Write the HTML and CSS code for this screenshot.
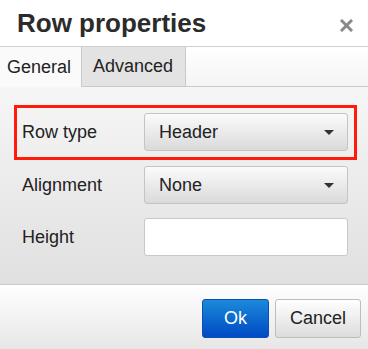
FILE: index.html
```html
<!DOCTYPE html>
<html>
<head>
<meta charset="utf-8">
<link rel="stylesheet" href="styles.css">
</head>
<body>
<div class="dialog">
  <div class="head">
    <h1 class="title">Row properties</h1>
    <span class="close"><svg width="13" height="13" viewBox="0 0 13 13"><path d="M2 2L11 11M11 2L2 11" stroke="#8a8a8a" stroke-width="3" stroke-linecap="square"/></svg></span>
  </div>
  <div class="tabs">
    <div class="tab active">General</div>
    <div class="tab">Advanced</div>
  </div>
  <div class="form">
    <div class="row hl">
      <label class="lbl">Row type</label>
      <div class="select"><span>Header</span><i class="caret"></i></div>
    </div>
    <div class="row">
      <label class="lbl">Alignment</label>
      <div class="select"><span>None</span><i class="caret"></i></div>
    </div>
    <div class="row">
      <label class="lbl">Height</label>
      <div class="input"></div>
    </div>
  </div>
  <div class="foot">
    <button class="btn primary">Ok</button>
    <button class="btn">Cancel</button>
  </div>
</div>
</body>
</html>
```
FILE: styles.css
```css
html, body { margin: 0; padding: 0; }
body { font-family: "Liberation Sans", Arial, sans-serif; color: #222; background: #fff; }
.dialog { width: 368px; height: 349px; display: flex; flex-direction: column; overflow: hidden; }
.head { height: 46px; display: flex; align-items: center; justify-content: space-between; padding: 0 15px 0 17px; border-bottom: 1px solid #d0d0d0; background: #fff; box-sizing: content-box; }
.title { margin: 0; font-size: 26px; font-weight: bold; color: #2b2b2b; }
.close { display: flex; margin-top: 4px; }
.tabs { height: 39px; display: flex; border-bottom: 1px solid #c9c9c9; background: linear-gradient(#ffffff, #f4f4f4); }
.tab { font-size: 18px; color: #222; padding: 0 12px 0 11px; display: flex; align-items: center; border-right: 1px solid #c9c9c9; background: #e3e3e3; }
.tab.active { background: #fafafa; padding: 0 10px 0 7px; margin-bottom: -1px; }
.form { flex: 1; padding: 18px 20px 0 22px; background: linear-gradient(#f6f6f6, #e0e0e0); }
.row { display: flex; align-items: center; height: 38px; margin-bottom: 14px; }
.row.hl { border: 3px solid #ff1a0a; margin: 0 -9px 6px -8px; padding: 5px 6px 6px 5px; }
.lbl { width: 122px; font-size: 18px; color: #222; }
.select { flex: 1; height: 38px; box-sizing: border-box; border: 1px solid #c4c4c4; border-radius: 3px; background: linear-gradient(#fbfbfb, #dadada); display: flex; align-items: center; justify-content: space-between; padding: 0 13px 0 14px; font-size: 18px; color: #222; }
.caret { width: 0; height: 0; border-left: 5px solid transparent; border-right: 5px solid transparent; border-top: 5px solid #333; }
.input { flex: 1; height: 38px; box-sizing: border-box; border: 1px solid #c8c8c8; border-radius: 3px; background: #fff; }
.foot { height: 65px; box-sizing: border-box; border-top: 1px solid #cacaca; background: linear-gradient(#ffffff, #e6e6e6); display: flex; justify-content: flex-end; align-items: flex-start; padding: 14px 7px 0 0; gap: 6px; }
.btn { font-family: "Liberation Sans", Arial, sans-serif; font-size: 18px; height: 39px; border-radius: 3px; border: 1px solid #bdbdbd; background: linear-gradient(#ffffff, #dcdcdc); color: #222; padding: 0 14px; }
.btn.primary { width: 67px; border-color: #0b50b0; background: linear-gradient(#1b8ad9, #0049c4); color: #fff; }
```
